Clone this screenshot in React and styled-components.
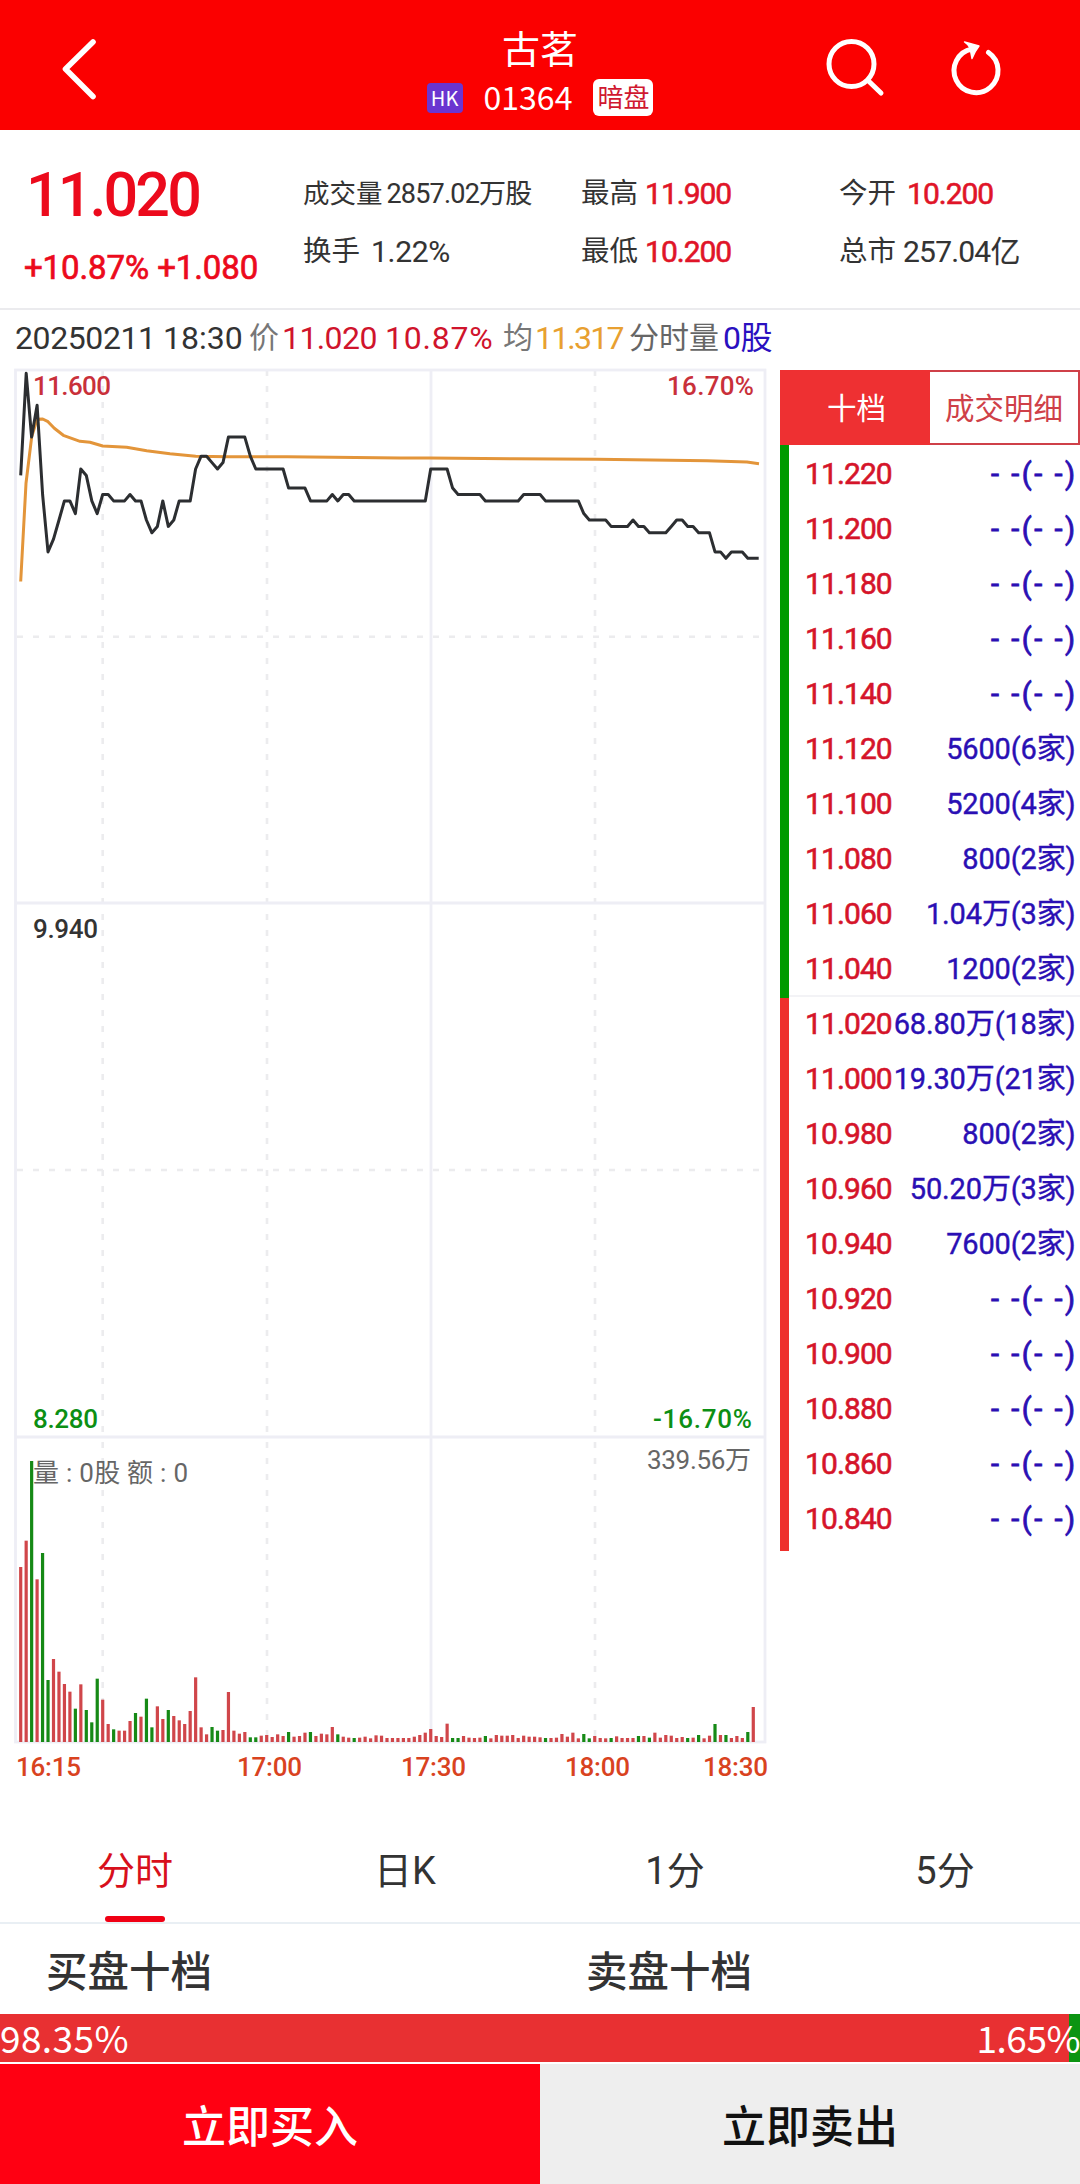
import React from 'react';
import styled, { createGlobalStyle } from 'styled-components';

const SELL = [
  ['11.220'],
  ['11.200'],
  ['11.180'],
  ['11.160'],
  ['11.140'],
  ['11.120', '5600', 6],
  ['11.100', '5200', 4],
  ['11.080', '800', 2],
  ['11.060', '1.04万', 3],
  ['11.040', '1200', 2],
];

const BUY = [
  ['11.020', '68.80万', 18],
  ['11.000', '19.30万', 21],
  ['10.980', '800', 2],
  ['10.960', '50.20万', 3],
  ['10.940', '7600', 2],
  ['10.920'],
  ['10.900'],
  ['10.880'],
  ['10.860'],
  ['10.840'],
];

// [price, minutes it was held]
const PRICE_RUNS = [
  [11.28, 1], [11.6, 1], [11.4, 1], [11.5, 1], [11.22, 1], [11.04, 1],
  [11.08, 1], [11.14, 1], [11.2, 2], [11.16, 1], [11.3, 1], [11.28, 1],
  [11.2, 1], [11.16, 1], [11.22, 2], [11.2, 3], [11.22, 1], [11.2, 2],
  [11.14, 1], [11.1, 1], [11.12, 1], [11.2, 1], [11.12, 1], [11.14, 1],
  [11.2, 3], [11.3, 1], [11.34, 2], [11.32, 1], [11.3, 1], [11.32, 1],
  [11.4, 4], [11.34, 1], [11.3, 6], [11.24, 4], [11.2, 4], [11.22, 1],
  [11.2, 1], [11.22, 2], [11.2, 14], [11.3, 4], [11.24, 1], [11.22, 5],
  [11.2, 7], [11.22, 4], [11.2, 7], [11.16, 1], [11.14, 4], [11.12, 4],
  [11.14, 1], [11.12, 2], [11.1, 4], [11.12, 1], [11.14, 2], [11.12, 2],
  [11.1, 3], [11.04, 2], [11.02, 1], [11.04, 3], [11.02, 3],
];

const AVG_POINTS =
  '20.7,581.5 26,483.3 31.7,436.7 37,419.3 42.7,419 48,421.7 54.3,428.3 63.3,435.3 80,441.3 90,442.3 102.7,446 126.7,447.3 146.7,450.7 170,453.7 195.7,456.3 228,456.7 287,456.7 333,457.3 400,458 430,458 513,458.7 597,459.3 707,460.7 747,462 759,463.7';

const VOLUMES = [
  525, 604, 843, 488, 567, 186, 249, 211, 174, 151, 100, 173, 96, 59, 190,
  127, 54, 38, 34, 34, 63, 87, 76, 130, 44, 107, 69, 96, 78, 65,
  54, 93, 194, 44, 23, 45, 34, 36, 150, 34, 25, 30, 14, 14, 19,
  21, 15, 23, 18, 30, 16, 18, 28, 30, 18, 25, 23, 45, 23, 16,
  13, 12, 13, 16, 11, 20, 19, 12, 12, 12, 12, 12, 16, 21, 28,
  39, 18, 15, 55, 12, 12, 18, 13, 12, 13, 18, 11, 21, 19, 19,
  21, 12, 19, 16, 16, 14, 12, 12, 13, 24, 16, 28, 11, 24, 11,
  18, 12, 11, 12, 17, 12, 12, 12, 18, 18, 13, 28, 13, 21, 19,
  12, 15, 12, 13, 21, 11, 19, 54, 21, 21, 12, 18, 12, 30, 105,
];

const FALLING = new Set([
  2, 4, 5, 10, 12, 13, 14, 17, 21, 23, 24, 27, 35, 36, 42, 43, 49, 53, 58, 61,
  79, 80, 85, 96, 103, 104, 108, 113, 115, 122, 124, 127, 129, 133,
]);

const STEP = 5.467;
const xAt = minute => 20.7 + minute * STEP;
const yAt = price => 558.3 - (price - 11.02) * 319;

const pricePoints = PRICE_RUNS.flatMap(([price, count]) =>
  Array(count).fill(price)
)
  .map((price, i) => `${xAt(i).toFixed(1)},${yAt(price).toFixed(1)}`)
  .join(' ');

const Chart = () => (
  <ChartSvg viewBox="0 366 780 1434">
    <g stroke="#ececee" strokeWidth="2.6" strokeDasharray="6 10">
      <line x1="17" y1="636.7" x2="765" y2="636.7" />
      <line x1="17" y1="1170" x2="765" y2="1170" />
      <line x1="102.7" y1="370" x2="102.7" y2="1742" />
      <line x1="267" y1="370" x2="267" y2="1742" />
      <line x1="595" y1="370" x2="595" y2="1742" />
    </g>
    <g stroke="#eeeef5" strokeWidth="2.8" fill="none">
      <rect x="15.5" y="370" width="749.5" height="1372" />
      <line x1="431" y1="370" x2="431" y2="1742" />
      <line x1="15.5" y1="903" x2="765" y2="903" />
      <line x1="15.5" y1="1437" x2="765" y2="1437" />
    </g>

    {VOLUMES.map((v, i) => (
      <rect
        key={i}
        x={xAt(i) - 1.6}
        y={1742 - v / 3}
        width="3.2"
        height={v / 3}
        fill={FALLING.has(i) ? '#168a16' : '#d0464a'}
      />
    ))}

    <polyline
      points={AVG_POINTS}
      fill="none"
      stroke="#e3953a"
      strokeWidth="3"
      strokeLinejoin="round"
    />
    <polyline
      points={pricePoints}
      fill="none"
      stroke="#2c2e31"
      strokeWidth="3"
      strokeLinejoin="round"
    />

    <Label x="33" y="395" textLength="78" fill="#c9303a">11.600</Label>
    <Label x="667" y="395" textLength="87" fill="#c9303a">16.70%</Label>
    <Label x="33" y="938" textLength="65" fill="#333">9.940</Label>
    <Label x="33" y="1428" textLength="65" fill="#0c8f14">8.280</Label>
    <Label x="653" y="1428" textLength="99" fill="#0c8f14">-16.70%</Label>
    <Label x="33" y="1482" textLength="155" fill="#666" $light>量 : 0股 额 : 0</Label>
    <Label x="647" y="1469" textLength="104" fill="#666" $light>339.56万</Label>

    <g fill="#d9431f">
      <Label x="16" y="1776" textLength="65">16:15</Label>
      <Label x="237" y="1776" textLength="65">17:00</Label>
      <Label x="401" y="1776" textLength="65">17:30</Label>
      <Label x="565" y="1776" textLength="65">18:00</Label>
      <Label x="703" y="1776" textLength="65">18:30</Label>
    </g>
  </ChartSvg>
);

const OrderRow = ({ row: [price, volume, brokers] }) => (
  <Row>
    <RowPrice>{price}</RowPrice>
    {volume ? (
      <RowVolume>
        {volume}({brokers}家)
      </RowVolume>
    ) : (
      <RowVolume $empty>- -(- -)</RowVolume>
    )}
  </Row>
);

export default function App() {
  return (
    <Page>
      <GlobalStyle />
      <Header>
        <BackIcon viewBox="0 0 40 64">
          <path d="M34 5 L6.5 32 L34 59.5" />
        </BackIcon>
        <Heading>
          <Title>古茗</Title>
          <Ticker>
            <Market>HK</Market>
            <Code>01364</Code>
            <Session>暗盘</Session>
          </Ticker>
        </Heading>
        <Actions>
          <ActionIcon viewBox="0 0 64 64">
            <circle cx="27.5" cy="28" r="22.5" />
            <path d="M44 44.5 L57 57" />
          </ActionIcon>
          <ActionIcon viewBox="0 0 64 64">
            <path d="M42.5 16.5 A22 22 0 1 1 26 13" />
            <path
              d="M33 10 L18.5 6 Q23 9 24 12 Q25 17 26 22.5 Q29 15 33 10 Z"
              fill="#fff"
              strokeWidth="1.4"
            />
          </ActionIcon>
        </Actions>
      </Header>

      <Quote>
        <Last>
          <LastPrice>11.020</LastPrice>
          <Change>+10.87% +1.080</Change>
        </Last>
        <Stat>
          <StatLabel $small>成交量</StatLabel>
          <StatValue $small $gap={4} $spacing={-0.8}>2857.02万股</StatValue>
        </Stat>
        <Stat>
          <StatLabel>最高</StatLabel>
          <StatValue $up>11.900</StatValue>
        </Stat>
        <Stat>
          <StatLabel>今开</StatLabel>
          <StatValue $up $gap={11}>10.200</StatValue>
        </Stat>
        <Stat>
          <StatLabel>换手</StatLabel>
          <StatValue $gap={11} $spacing={-0.3}>1.22%</StatValue>
        </Stat>
        <Stat>
          <StatLabel>最低</StatLabel>
          <StatValue $up>10.200</StatValue>
        </Stat>
        <Stat>
          <StatLabel>总市</StatLabel>
          <StatValue $spacing={-0.8}>257.04亿</StatValue>
        </Stat>
      </Quote>

      <Info>
        <InfoText $spacing={-0.4}>20250211</InfoText>
        <InfoText>18:30</InfoText>
        <InfoText $color="#777" $size={30}>价</InfoText>
        <InfoText $color="#d0142c" $spacing={-0.6}>11.020</InfoText>
        <InfoText $color="#d0142c" $spacing={0.8}>10.87%</InfoText>
        <InfoText $color="#777" $size={30}>均</InfoText>
        <InfoText $color="#e8a030" $spacing={-1.8}>11.317</InfoText>
        <InfoText $color="#666" $size={30}>分时量</InfoText>
        <InfoText $color="#2a10c0" $spacing={-0.6}>0股</InfoText>
      </Info>

      <Main>
        <Chart />
        <Book>
          <BookTabs>
            <BookTab $active>十档</BookTab>
            <BookTab>成交明细</BookTab>
          </BookTabs>
          <BookBody>
            <Sides>
              <Side $color="#009a00" />
              <Side $color="#ee302c" />
            </Sides>
            <Rows>
              {SELL.map(row => (
                <OrderRow key={row[0]} row={row} />
              ))}
              {BUY.map(row => (
                <OrderRow key={row[0]} row={row} />
              ))}
            </Rows>
          </BookBody>
        </Book>
      </Main>

      <Periods>
        <Period $active>分时</Period>
        <Period>日K</Period>
        <Period>1分</Period>
        <Period>5分</Period>
      </Periods>

      <Depth>
        <DepthTitle>买盘十档</DepthTitle>
        <DepthTitle>卖盘十档</DepthTitle>
      </Depth>
      <Ratio>
        <Percent $spacing={0.4}>98.35%</Percent>
        <Percent $spacing={-0.5}>1.65%</Percent>
      </Ratio>

      <Footer>
        <TradeButton $buy>立即买入</TradeButton>
        <TradeButton>立即卖出</TradeButton>
      </Footer>
    </Page>
  );
}

const GlobalStyle = createGlobalStyle`
  * {
    box-sizing: border-box;
  }
  body {
    margin: 0;
    background-color: #fff;
  }
`;

const Page = styled.div`
  width: 1080px;
  height: 2184px;
  display: flex;
  flex-direction: column;
  overflow: hidden;
  background-color: #fff;
  color: #333;
  font-family: Roboto, 'Noto Sans CJK SC', sans-serif;
`;

const Header = styled.header`
  height: 130px;
  flex: none;
  display: grid;
  grid-template-columns: 360px 360px 360px;
  background-color: #fb0000;
  color: #fff;
  & svg {
    fill: none;
    stroke: #fff;
    stroke-linecap: round;
    stroke-linejoin: round;
  }
`;

const BackIcon = styled.svg`
  width: 40px;
  height: 64px;
  margin: 37px 0 0 59px;
  stroke-width: 5.6px;
`;

const Heading = styled.div`
  display: flex;
  flex-direction: column;
  align-items: center;
  padding-top: 29px;
`;

const Title = styled.div`
  font-size: 38px;
  line-height: 42px;
`;

const Ticker = styled.div`
  display: flex;
  align-items: center;
  margin-top: 8px;
`;

const Market = styled.span`
  width: 36px;
  height: 30px;
  border-radius: 4px;
  background-color: #6a35d0;
  font-family: 'Noto Sans CJK SC', sans-serif;
  font-size: 20px;
  line-height: 29px;
  text-align: center;
`;

const Code = styled.span`
  margin: 0 21px;
  font-family: 'Noto Sans CJK SC', sans-serif;
  font-size: 32px;
  line-height: 35px;
  padding-bottom: 2px;
`;

const Session = styled.span`
  width: 60px;
  height: 37px;
  border-radius: 6px;
  background-color: #fff;
  color: #d01830;
  font-size: 26px;
  line-height: 38px;
  text-align: center;
`;

const Actions = styled.div`
  display: flex;
  gap: 58px;
  padding: 36px 0 0 104px;
`;

const ActionIcon = styled.svg`
  width: 64px;
  height: 64px;
  stroke-width: 5px;
`;

const Quote = styled.section`
  height: 180px;
  flex: none;
  display: grid;
  grid-template-columns: 303px 278px 258px 241px;
  grid-template-rows: 58px 58px;
  padding-top: 35px;
  border-bottom: 2px solid #ebebee;
`;

const Last = styled.div`
  grid-row: span 2;
  color: #ec0a1c;
  font-weight: 500;
  white-space: nowrap;
`;

const LastPrice = styled.div`
  margin: -6px 0 0 26px;
  font-size: 61px;
  line-height: 72px;
  letter-spacing: -2.9px;
`;

const Change = styled.div`
  margin: 17px 0 0 24px;
  font-size: 33px;
  font-weight: 400;
  line-height: 40px;
  letter-spacing: -0.1px;
  -webkit-text-stroke: 0.7px currentColor;
`;

const Stat = styled.div`
  display: flex;
  align-items: center;
  white-space: nowrap;
  line-height: 40px;
`;

const StatLabel = styled.span`
  font-size: ${props => (props.$small ? '26.5px' : '28.5px')};
`;

const StatValue = styled.span`
  margin-left: ${props => props.$gap || 7}px;
  font-size: ${props => (props.$small ? '27px' : '30px')};
  letter-spacing: ${props => props.$spacing || -1}px;
  color: ${props => (props.$up ? '#e01428' : '#333')};
  -webkit-text-stroke: ${props => (props.$up ? 0.6 : 0.1)}px currentColor;
`;

const Info = styled.section`
  height: 56px;
  flex: none;
  display: grid;
  grid-template-columns: 148px 86px 33px 103px 118px 32px 94px 94px 100px;
  align-items: center;
  padding-left: 15px;
`;

const InfoText = styled.span`
  color: ${props => props.$color || '#333'};
  font-size: ${props => props.$size || 32}px;
  letter-spacing: ${props => props.$spacing || 0}px;
  line-height: 40px;
  white-space: nowrap;
`;

const Main = styled.main`
  height: 1434px;
  flex: none;
  display: grid;
  grid-template-columns: 780px 300px;
`;

const ChartSvg = styled.svg`
  width: 780px;
  height: 1434px;
  display: block;
`;

const Label = styled.text`
  font-size: 26px;
  font-weight: ${props => (props.$light ? 400 : 500)};
`;

const Book = styled.aside`
  padding-top: 4px;
`;

const BookTabs = styled.div`
  height: 75px;
  display: grid;
  grid-template-columns: 150px 150px;
  grid-template-rows: 75px;
`;

const BookTab = styled.div`
  display: flex;
  justify-content: center;
  align-items: center;
  border: 2px solid ${props => (props.$active ? '#ee3032' : '#cf4048')};
  border-left-width: 0;
  padding: 2px 0 0 ${props => (props.$active ? 5 : 0)}px;
  background-color: ${props => (props.$active ? '#ee3032' : '#fff')};
  color: ${props => (props.$active ? '#fff' : '#cf4048')};
  font-size: 29.5px;
  line-height: 40px;
`;

const BookBody = styled.div`
  display: flex;
`;

const Sides = styled.div`
  width: 9px;
`;

const Side = styled.div`
  height: 553px;
  background-color: ${props => props.$color};
`;

const Rows = styled.div`
  flex: 1;
`;

const Row = styled.div`
  height: 55px;
  display: flex;
  justify-content: space-between;
  align-items: center;
  padding: 2px 5px 0 16px;
  white-space: nowrap;
  line-height: 40px;
  &:nth-child(11) {
    box-shadow: inset 0 2px 0 #f3f3f6;
  }
`;

const RowPrice = styled.span`
  color: #d5142a;
  font-size: 30px;
  letter-spacing: -0.9px;
  -webkit-text-stroke: 0.6px currentColor;
`;

const RowVolume = styled.span`
  color: #2a0fb4;
  font-size: 29px;
  letter-spacing: ${props => (props.$empty ? 2.5 : -0.15)}px;
  margin-right: ${props => (props.$empty ? -2.5 : -0.5)}px;
  -webkit-text-stroke: ${props => (props.$empty ? 0.8 : 0.4)}px currentColor;
`;

const Periods = styled.nav`
  height: 124px;
  flex: none;
  display: grid;
  grid-template-columns: repeat(4, 1fr);
  border-bottom: 2px solid #e9eff4;
`;

const Period = styled.div`
  display: flex;
  flex-direction: column;
  align-items: center;
  justify-content: flex-end;
  color: ${props => (props.$active ? '#d8101c' : '#333')};
  font-size: 38px;
  line-height: 50px;
  &::after {
    content: '';
    width: 60px;
    height: 6px;
    margin-top: 20px;
    border-radius: 3px;
    background-color: ${props => (props.$active ? '#f00014' : 'transparent')};
  }
`;

const Depth = styled.div`
  height: 90px;
  flex: none;
  display: grid;
  grid-template-columns: 540px 540px;
  align-items: center;
`;

const DepthTitle = styled.div`
  padding-left: 46px;
  font-size: 41.5px;
  font-weight: 500;
`;

const Ratio = styled.div`
  height: 48px;
  flex: none;
  display: flex;
  justify-content: space-between;
  align-items: flex-start;
  background: linear-gradient(to right, #e83032 1069px, #0c9412 1069px);
  color: #fff;
`;

const Percent = styled.span`
  font-family: 'Noto Sans CJK SC', sans-serif;
  font-size: 37px;
  line-height: 46px;
  letter-spacing: ${props => props.$spacing}px;
`;

const Footer = styled.footer`
  height: 120px;
  margin-top: 2px;
  flex: none;
  display: grid;
  grid-template-columns: 540px 540px;
`;

const TradeButton = styled.button`
  border: none;
  padding: 0;
  font-family: inherit;
  font-size: 44px;
  font-weight: 500;
  background-color: ${props => (props.$buy ? '#ff0012' : '#eeeeee')};
  color: ${props => (props.$buy ? '#fff' : '#111')};
`;
